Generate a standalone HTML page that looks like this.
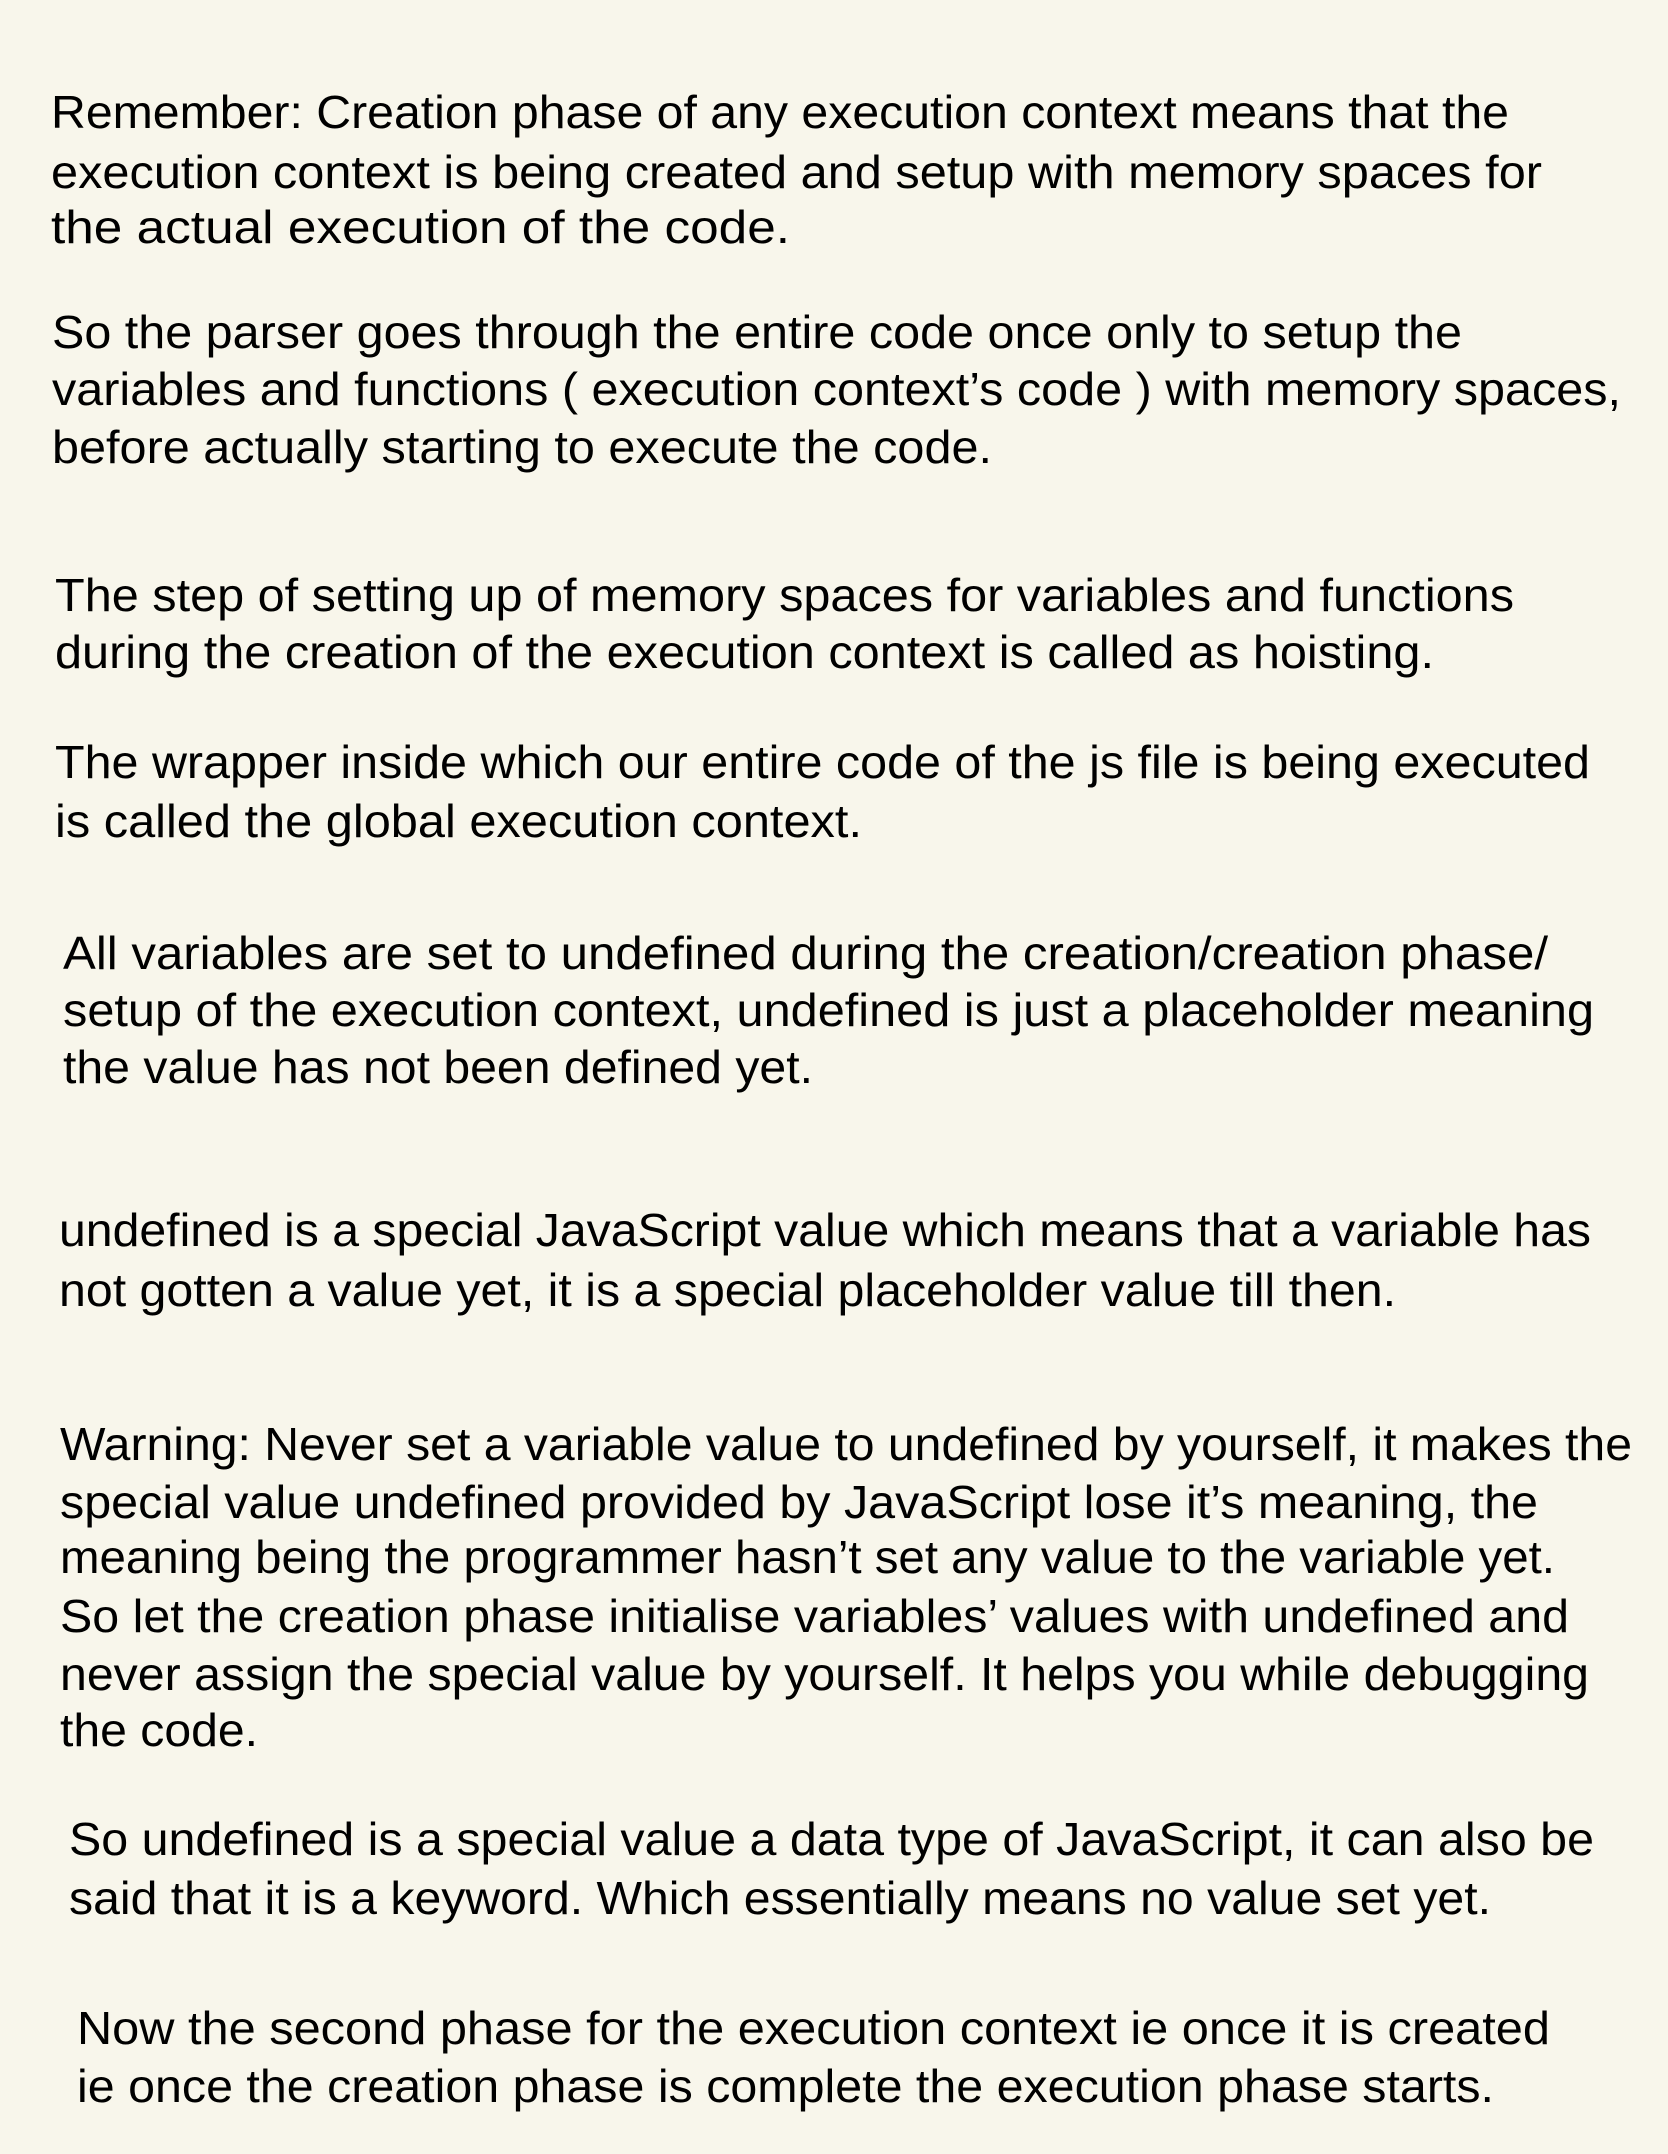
<!DOCTYPE html>
<html><head><meta charset="utf-8"><style>
html,body{margin:0;padding:0;background:#f8f6eb;}
svg{display:block}
text{font-family:"Liberation Sans",Arial,sans-serif;font-size:46px;fill:#000;}
</style></head><body>
<svg width="1668" height="2154" viewBox="0 0 1668 2154" xmlns="http://www.w3.org/2000/svg">
<rect width="1668" height="2154" fill="#f8f6eb"/>
<text x="51" y="128" textLength="1458" lengthAdjust="spacingAndGlyphs">Remember: Creation phase of any execution context means that the</text>
<text x="51" y="188" textLength="1491" lengthAdjust="spacingAndGlyphs">execution context is being created and setup with memory spaces for</text>
<text x="51" y="243" textLength="739" lengthAdjust="spacingAndGlyphs">the actual execution of the code.</text>

<text x="52" y="348" textLength="1410" lengthAdjust="spacingAndGlyphs">So the parser goes through the entire code once only to setup the</text>
<text x="52" y="405" textLength="1569" lengthAdjust="spacingAndGlyphs">variables and functions ( execution context’s code ) with memory spaces,</text>
<text x="52" y="463" textLength="940" lengthAdjust="spacingAndGlyphs">before actually starting to execute the code.</text>

<text x="55" y="611" textLength="1459" lengthAdjust="spacingAndGlyphs">The step of setting up of memory spaces for variables and functions</text>
<text x="55" y="668" textLength="1379" lengthAdjust="spacingAndGlyphs">during the creation of the execution context is called as hoisting.</text>

<text x="55" y="778" textLength="1535" lengthAdjust="spacingAndGlyphs">The wrapper inside which our entire code of the js file is being executed</text>
<text x="55" y="837" textLength="807" lengthAdjust="spacingAndGlyphs">is called the global execution context.</text>

<text x="63" y="969" textLength="1485" lengthAdjust="spacingAndGlyphs">All variables are set to undefined during the creation/creation phase/</text>
<text x="63" y="1026" textLength="1531" lengthAdjust="spacingAndGlyphs">setup of the execution context, undefined is just a placeholder meaning</text>
<text x="63" y="1083" textLength="750" lengthAdjust="spacingAndGlyphs">the value has not been defined yet.</text>

<text x="59" y="1246" textLength="1532" lengthAdjust="spacingAndGlyphs">undefined is a special JavaScript value which means that a variable has</text>
<text x="59" y="1306" textLength="1337" lengthAdjust="spacingAndGlyphs">not gotten a value yet, it is a special placeholder value till then.</text>

<text x="60" y="1460" textLength="1572" lengthAdjust="spacingAndGlyphs">Warning: Never set a variable value to undefined by yourself, it makes the</text>
<text x="60" y="1518" textLength="1478" lengthAdjust="spacingAndGlyphs">special value undefined provided by JavaScript lose it’s meaning, the</text>
<text x="60" y="1573" textLength="1495" lengthAdjust="spacingAndGlyphs">meaning being the programmer hasn’t set any value to the variable yet.</text>
<text x="60" y="1632" textLength="1509" lengthAdjust="spacingAndGlyphs">So let the creation phase initialise variables’ values with undefined and</text>
<text x="60" y="1690" textLength="1529" lengthAdjust="spacingAndGlyphs">never assign the special value by yourself. It helps you while debugging</text>
<text x="60" y="1746" textLength="198" lengthAdjust="spacingAndGlyphs">the code.</text>

<text x="69" y="1855" textLength="1525" lengthAdjust="spacingAndGlyphs">So undefined is a special value a data type of JavaScript, it can also be</text>
<text x="69" y="1914" textLength="1422" lengthAdjust="spacingAndGlyphs">said that it is a keyword. Which essentially means no value set yet.</text>

<text x="77" y="2044" textLength="1473" lengthAdjust="spacingAndGlyphs">Now the second phase for the execution context ie once it is created</text>
<text x="77" y="2102" textLength="1417" lengthAdjust="spacingAndGlyphs">ie once the creation phase is complete the execution phase starts.</text>
</svg>
</body></html>
